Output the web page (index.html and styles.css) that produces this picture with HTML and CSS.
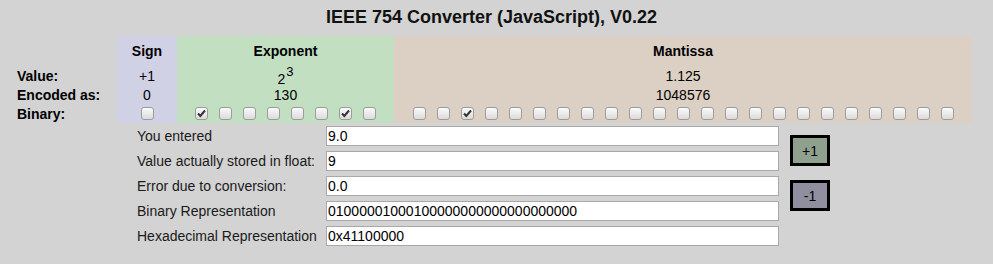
FILE: index.html
```html
<!DOCTYPE html>
<html lang="en">
<head>
  <meta charset="UTF-8" />
  <title>IEEE 754 Converter</title>
  <link rel="stylesheet" href="styles.css">
</head>
<body>

  <h1 class="title">IEEE 754 Converter (JavaScript), V0.22</h1>

  <div class="bits">
    <div class="cell label"></div>
    <div class="cell sign head">Sign</div>
    <div class="cell exponent head">Exponent</div>
    <div class="cell mantissa head">Mantissa</div>

    <div class="cell label">Value:</div>
    <div class="cell sign">+1</div>
    <div class="cell exponent"><span class="power">2<sup>3</sup></span></div>
    <div class="cell mantissa">1.125</div>

    <div class="cell label">Encoded as:</div>
    <div class="cell sign">0</div>
    <div class="cell exponent">130</div>
    <div class="cell mantissa">1048576</div>

    <div class="cell label">Binary:</div>
    <div class="cell sign boxes">
      <input type="checkbox">
    </div>
    <div class="cell exponent boxes">
      <input type="checkbox" checked>
      <input type="checkbox">
      <input type="checkbox">
      <input type="checkbox">
      <input type="checkbox">
      <input type="checkbox">
      <input type="checkbox" checked>
      <input type="checkbox">
    </div>
    <div class="cell mantissa boxes" id="mantissa-bits"></div>
  </div>

  <div class="details">
    <label for="entered">You entered</label>
    <input class="field" id="entered" type="text" value="9.0">
    <div class="steps">
      <button class="step plus">+1</button>
      <button class="step minus">-1</button>
    </div>

    <label for="stored">Value actually stored in float:</label>
    <input class="field" id="stored" type="text" value="9">

    <label for="error">Error due to conversion:</label>
    <input class="field" id="error" type="text" value="0.0">

    <label for="binary">Binary Representation</label>
    <input class="field" id="binary" type="text" value="01000001000100000000000000000000">

    <label for="hex">Hexadecimal Representation</label>
    <input class="field" id="hex" type="text" value="0x41100000">
  </div>

  <script>
    var box = document.getElementById("mantissa-bits");
    for (var i = 0; i < 23; i++) {
      var cb = document.createElement("input");
      cb.type = "checkbox";
      if (i === 2) cb.checked = true;
      box.appendChild(cb);
    }
  </script>

</body>
</html>
```

FILE: styles.css
```css
body {
  margin: 8px;
  background: #d3d3d3;
  font-family: "Liberation Sans", Arial, sans-serif;
  font-size: 14px;
  color: #000;
}

.title {
  margin: 0 0 10px 0;
  font-size: 18px;
  line-height: 18px;
  font-weight: bold;
  text-align: center;
  color: #111;
  padding-right: 10px;
}

.bits {
  display: grid;
  grid-template-columns: 109px 60px 217px 578px;
  grid-template-rows: 30px 20px 18px 19px;
}

.cell {
  display: flex;
  align-items: center;
  justify-content: center;
  line-height: 16px;
}

.cell.label {
  justify-content: flex-start;
  padding-left: 9px;
  font-weight: bold;
}

.head {
  font-weight: bold;
}

.sign { background: #d1d1e6; }
.exponent { background: #c2dfc2; }
.mantissa { background: #dcd0c4; }

.power {
  position: relative;
  top: 3px;
}

sup {
  font-size: 13px;
  line-height: 0;
  position: relative;
  top: -2px;
  margin-left: 1px;
}

.boxes {
  gap: 11px;
  padding-bottom: 1px;
}

input[type="checkbox"] {
  appearance: none;
  -webkit-appearance: none;
  margin: 0;
  width: 13px;
  height: 13px;
  border: 1px solid #9c9c9c;
  border-radius: 3px;
  background: linear-gradient(#fbfbfb, #dadada);
  box-sizing: border-box;
}

input[type="checkbox"]:checked {
  background: url("data:image/svg+xml,%3Csvg xmlns='http://www.w3.org/2000/svg' width='11' height='11'%3E%3Cpath d='M2 5.5 L4.3 8 L9 2.5' fill='none' stroke='%23333' stroke-width='2'/%3E%3C/svg%3E") no-repeat center, linear-gradient(#fbfbfb, #dadada);
}

.details {
  display: grid;
  grid-template-columns: 189px 453px auto;
  grid-auto-rows: 20px;
  row-gap: 5px;
  margin: 3px 0 0 129px;
}

.details label {
  display: flex;
  align-items: center;
  color: #1a1a1a;
}

.field {
  box-sizing: border-box;
  height: 20px;
  margin: 0;
  padding: 0 1px;
  border: 1px solid #a9a9a9;
  background: #fff;
  font-family: "Liberation Sans", Arial, sans-serif;
  font-size: 14px;
  color: #000;
}

.steps {
  grid-column: 3;
  grid-row: 1 / span 5;
  display: flex;
  flex-direction: column;
  align-items: flex-start;
  gap: 14px;
  padding: 9px 0 0 11px;
}

.step {
  width: 40px;
  height: 31px;
  border: 3px solid #000;
  font-family: "Liberation Sans", Arial, sans-serif;
  font-size: 14px;
  color: #000;
  padding: 0;
}

.step.plus { background: #8fa08f; }
.step.minus { background: #8f8fa0; }
```
